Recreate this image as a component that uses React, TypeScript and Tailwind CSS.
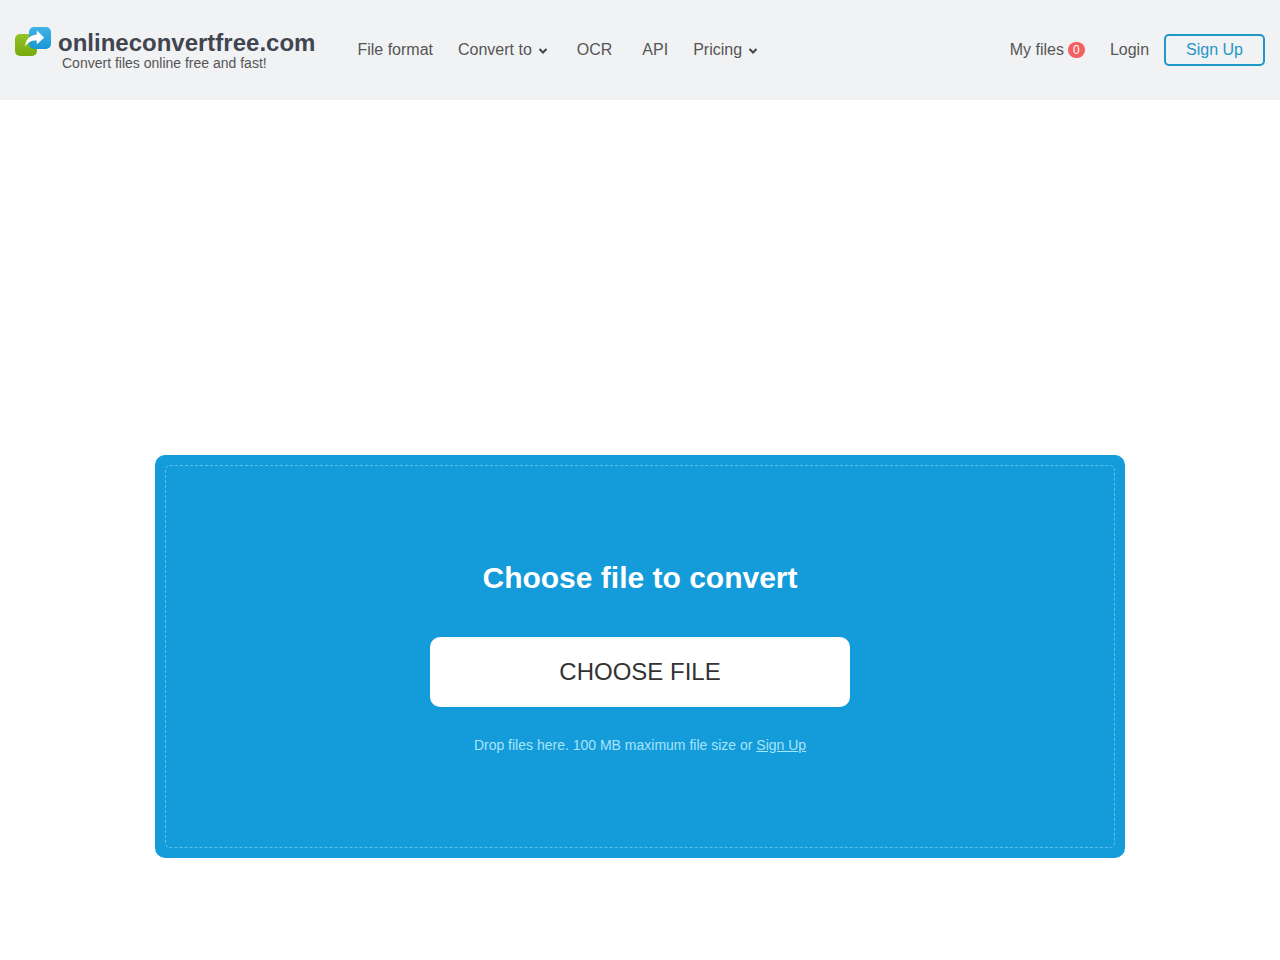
import { useRef } from "react";

const FONT = "font-['Liberation_Sans',Arial,sans-serif]";

function Logo() {
  return (
    <svg width="36" height="29" viewBox="0 0 36 29" className="shrink-0" aria-hidden="true">
      <defs>
        <linearGradient id="logoGreen" x1="0" y1="0" x2="0" y2="1">
          <stop offset="0" stopColor="#93c524" />
          <stop offset="1" stopColor="#76a90b" />
        </linearGradient>
        <linearGradient id="logoBlue" x1="0" y1="0" x2="0" y2="1">
          <stop offset="0" stopColor="#41b3e8" />
          <stop offset="1" stopColor="#1a97d3" />
        </linearGradient>
      </defs>
      <rect x="0" y="7" width="22" height="22" rx="5" fill="url(#logoGreen)" />
      <rect x="14" y="0" width="22" height="22" rx="5" fill="url(#logoBlue)" />
      <path
        d="M10 20C10.5 13 14.5 8.2 21.8 7.6V3.6L29.2 10.6L21.8 17.6V13.6C16.5 13.4 12.8 15.3 10 20Z"
        fill="#fff"
      />
    </svg>
  );
}

function Chevron() {
  return (
    <svg width="10" height="8" viewBox="0 0 10 8" className="mt-0.5 shrink-0" aria-hidden="true">
      <path d="M1.5 2L5 5.5L8.5 2" fill="none" stroke="#444" strokeWidth="2" />
    </svg>
  );
}

function Header() {
  return (
    <header className="flex h-[100px] items-center justify-between bg-[#f1f2f4] px-[15px] text-base text-[#555]">
      <div className="flex items-center">
        <a href="#" className="flex items-start gap-[7px] pb-0.5">
          <Logo />
          <span className="flex flex-col">
            <span className="text-2xl leading-8 font-bold text-[#40454f]">onlineconvertfree.com</span>
            <span className="-mt-1 pl-1 text-sm leading-4">Convert files online free and fast!</span>
          </span>
        </a>
        <nav className="ml-[42px] flex items-center whitespace-nowrap">
          <a href="#" className="mr-[25px]">File format</a>
          <button type="button" className="mr-[29px] flex items-center gap-1.5">
            Convert to
            <Chevron />
          </button>
          <a href="#" className="mr-[30px]">OCR</a>
          <a href="#" className="mr-[25px]">API</a>
          <button type="button" className="flex items-center gap-1.5">
            Pricing
            <Chevron />
          </button>
        </nav>
      </div>
      <div className="flex items-center whitespace-nowrap">
        <a href="#" className="mr-[25px] flex items-center gap-1">
          My files
          <span className="flex h-4 w-[17px] items-center justify-center rounded-full bg-[#f46060] text-xs text-white">0</span>
        </a>
        <a href="#" className="mr-[15px]">Login</a>
        <a
          href="#"
          className="rounded-[5px] border-2 border-[#1f97c7] px-5 py-0.5 text-[#1f97c7]"
        >
          Sign Up
        </a>
      </div>
    </header>
  );
}

function UploadPanel() {
  const inputRef = useRef<HTMLInputElement>(null);

  return (
    <section className="mx-auto mt-[355px] max-w-[970px] rounded-[10px] bg-[#149bd9] p-2.5">
      <div className="flex flex-col items-center rounded-[5px] border border-dashed border-[#5fc0ea] px-4 py-[92px] text-center">
        <h1 className="text-3xl leading-10 font-bold text-white">Choose file to convert</h1>
        <button
          type="button"
          onClick={() => inputRef.current?.click()}
          className="mt-[39px] h-[70px] w-full max-w-[420px] rounded-[10px] bg-white text-2xl text-[#333]"
        >
          CHOOSE FILE
        </button>
        <input ref={inputRef} type="file" multiple aria-label="Choose file" className="hidden" />
        <p className="mt-7 text-sm text-[#a8e4fa]">
          Drop files here. 100 MB maximum file size or{" "}
          <a href="#" className="underline">Sign Up</a>
        </p>
      </div>
    </section>
  );
}

export default function App() {
  return (
    <div className={`min-h-screen bg-white ${FONT}`}>
      <Header />
      <main className="flow-root px-4 pb-24">
        <UploadPanel />
      </main>
    </div>
  );
}
